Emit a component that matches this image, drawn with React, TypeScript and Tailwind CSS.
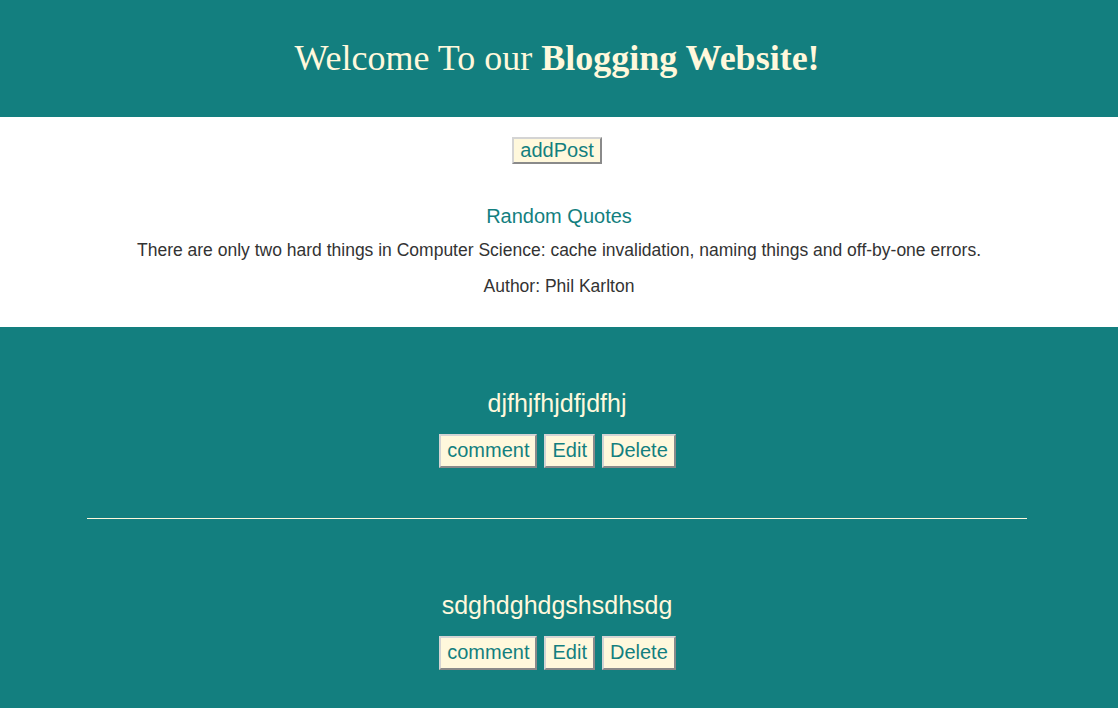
import React from 'react';

const posts = [
  { id: 1, title: 'djfhjfhjdfjdfhj' },
  { id: 2, title: 'sdghdghdgshsdhsdg' },
];

function Btn({ children, small }: { children: React.ReactNode; small?: boolean }) {
  return (
    <button
      className={
        small
          ? 'bg-[#fff8dc] text-[#137f7f] text-[20px] leading-[23px] px-[6px] py-0 border-2 border-t-[#d4d4d4] border-l-[#d4d4d4] border-b-[#8a8a8a] border-r-[#8a8a8a]'
          : 'bg-[#fff8dc] text-[#137f7f] text-[20px] leading-[23px] px-[6px] pt-[3px] pb-[4px] border-2 border-t-[#d4d4d4] border-l-[#d4d4d4] border-b-[#8a8a8a] border-r-[#8a8a8a]'
      }
    >
      {children}
    </button>
  );
}

export default function App() {
  return (
    <div className="min-h-[708px] bg-[#137f7f] font-['Liberation_Sans',Arial,sans-serif]">
      {/* header */}
      <header className="h-[117px] flex items-center justify-center bg-[#137f7f] pr-[4px]">
        <h1 className="font-['Liberation_Serif','Times_New_Roman',serif] text-[36px] text-[#fff8dc] pb-[2px]">
          Welcome To our <b>Blogging Website!</b>
        </h1>
      </header>

      {/* quote */}
      <section className="bg-white h-[210px] flex flex-col items-center pt-[20px]">
        <div className="pr-[4px]">
          <Btn small>addPost</Btn>
        </div>
        <h3 className="mt-[37px] text-[20px] text-[#137f7f]">Random Quotes</h3>
        <p className="mt-[6px] text-[17.5px] text-[#333]">
          There are only two hard things in Computer Science: cache invalidation, naming things and off-by-one errors.
        </p>
        <p className="mt-[10px] text-[17.5px] text-[#333]">Author: Phil Karlton</p>
      </section>

      {/* posts */}
      <section className="flex flex-col items-center pt-[61px] pr-[4px]">
        {posts.map((p, i) => (
          <div key={p.id} className="w-[940px] flex flex-col items-center">
            <h2 className="text-[25px] text-[#fff8dc] leading-[30px]">{p.title}</h2>
            <div className="flex gap-[7px] mt-[16px] pl-[1px]">
              <Btn>comment</Btn>
              <Btn>Edit</Btn>
              <Btn>Delete</Btn>
            </div>
            {i < posts.length - 1 && <hr className="w-full border-t border-[#fff8dc] mt-[50px] mb-[71px]" />}
          </div>
        ))}
      </section>
    </div>
  );
}
